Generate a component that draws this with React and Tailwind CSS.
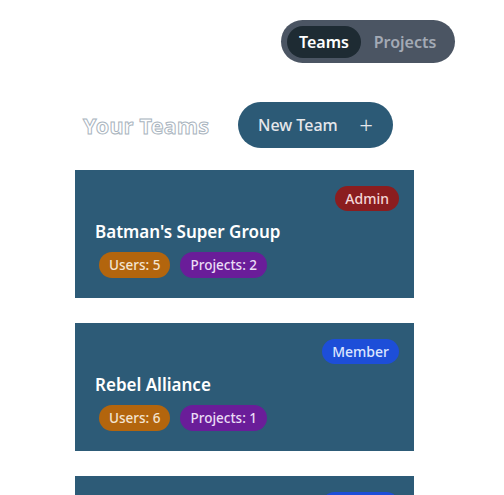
const teams = [
  { name: "Batman's Super Group", role: 'Admin', users: 5, projects: 2 },
  { name: 'Rebel Alliance', role: 'Member', users: 6, projects: 1 },
  { name: 'Avengers', role: 'Member', users: 4, projects: 3 },
];

const App = () => {
  return (
    <div className="min-h-screen bg-white font-['Noto_Sans',sans-serif]">
      {/* Tabs */}
      <div className="flex justify-end pt-5 pr-[49px]">
        <div className="flex items-center h-[43px] w-[174px] rounded-full bg-[#4b5563] px-[6px]">
          <div className="flex items-center justify-center h-8 w-[74px] rounded-full bg-[#1e2b33] text-white font-semibold text-[16px]">
            Teams
          </div>
          <div className="flex-1 text-center text-[#a3aab5] font-semibold text-[16px]">Projects</div>
        </div>
      </div>

      {/* Header */}
      <div className="flex items-center mt-[39px] pl-[83px]">
        <h1 className="text-[21.5px] font-bold text-white [-webkit-text-stroke:1px_#a9b4be] w-[155px] tracking-[0.3px] pt-[2px]">
          Your Teams
        </h1>
        <button className="flex items-center h-[46px] w-[155px] rounded-full bg-[#2c5a76] pl-5 pr-5 text-[#e5e7eb] text-[16px] font-medium">
          New Team
          <span className="ml-auto text-[24px] font-light leading-none">+</span>
        </button>
      </div>

      {/* Team cards */}
      <div className="flex flex-col gap-[25px] mt-[22px] ml-[75px] w-[339px]">
        {teams.map((t) => (
          <div key={t.name} className="h-[128px] bg-[#2d5b77] pt-4 pb-5 px-5 flex flex-col">
            <div className="flex justify-end">
              <span
                className={
                  'rounded-full px-[10px] h-[25px] flex items-center text-[14px] font-medium -mr-[5px] ' +
                  (t.role === 'Admin' ? 'bg-[#8b1d1f] text-[#f3d6d6]' : 'bg-[#1d4ed8] text-[#dbe5ff]')
                }
              >
                {t.role}
              </span>
            </div>
            <h2 className="mt-[9px] text-white text-[17px] font-semibold leading-6">{t.name}</h2>
            <div className="flex gap-[10px] mt-[8px] pl-1">
              <span className="rounded-full bg-[#b3650d] text-[#f3e4d0] text-[13.5px] font-medium h-[26px] px-[10px] flex items-center">
                Users: {t.users}
              </span>
              <span className="rounded-full bg-[#6a1d99] text-[#eadcf5] text-[13.5px] font-medium h-[26px] px-[10px] flex items-center">
                Projects: {t.projects}
              </span>
            </div>
          </div>
        ))}
      </div>
    </div>
  );
};

export default App;
